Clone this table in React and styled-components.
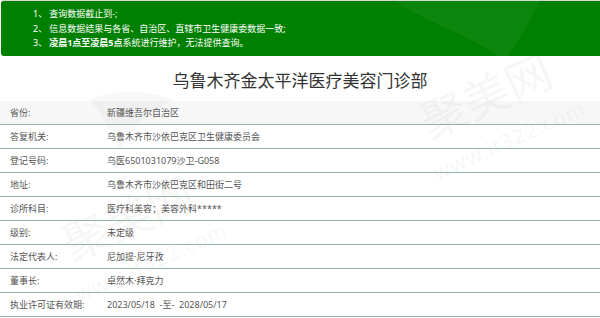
import React from "react";
import styled, { createGlobalStyle } from "styled-components";

const GlobalStyle = createGlobalStyle`
  html, body {
    margin: 0;
    padding: 0;
    background: #ffffff;
  }
  body {
    font-family: "Noto Sans", "Noto Sans CJK SC", sans-serif;
  }
`;

const Page = styled.div`
  position: relative;
  width: 600px;
  height: 318px;
  overflow: hidden;
`;

const Notice = styled.ul`
  list-style: none;
  margin: 0 -6px 0 1px;
  padding: 6px 0 5px 32px;
  background: #008000;
  border-top: 1px solid #d6d6d6;
  border-radius: 3px 0 0 3px;
  color: #ffffff;
  font-size: 9px;
  line-height: 14.5px;
`;

const NoticeItem = styled.li`
  white-space: nowrap;
  b {
    font-weight: 700;
  }
`;

const Num = styled.span`
  margin-right: 2px;
`;

const Title = styled.h1`
  margin: 0;
  padding: 13px 0 8px;
  font-size: 17px;
  line-height: 24px;
  font-weight: 400;
  color: #333333;
  text-align: center;
`;

const Table = styled.div`
  display: flex;
  flex-direction: column;
`;

const Row = styled.div`
  display: grid;
  grid-template-columns: 97px 1fr;
  align-items: center;
  height: 23px;
  padding-left: 10px;
  border-bottom: 1px solid #8cbc9f;
  background: ${(p) => (p.shaded ? "#f7f7f7" : "transparent")};
  font-size: 9px;
  color: #555555;
`;

const Label = styled.span`
  white-space: nowrap;
`;

const Value = styled.span`
  white-space: pre;
`;

const Watermark = styled.svg`
  position: absolute;
  left: 0;
  top: 0;
  pointer-events: none;
`;

const rows = [
  ["省份:", "新疆维吾尔自治区"],
  ["答复机关:", "乌鲁木齐市沙依巴克区卫生健康委员会"],
  ["登记号码:", "乌医6501031079沙卫-G058"],
  ["地址:", "乌鲁木齐市沙依巴克区和田街二号"],
  ["诊所科目:", "医疗科美容；美容外科*****"],
  ["级别:", "未定级"],
  ["法定代表人:", "尼加提·尼牙孜"],
  ["董事长:", "卓然木·拜克力"],
  ["执业许可证有效期:", "2023/05/18  -至-  2028/05/17"],
];

const markFill = "rgba(120,120,120,0.065)";

const Mark = ({ x, y }) => (
  <g transform={`translate(${x} ${y}) rotate(-24)`}>
    <text
      x="0"
      y="0"
      fontSize="46"
      fontFamily="'Noto Sans CJK SC', sans-serif"
      fill={markFill}
    >
      聚美网
    </text>
    <text
      x="-10"
      y="40"
      fontSize="21"
      fontFamily="'Noto Sans', sans-serif"
      fill={markFill}
      letterSpacing="1"
    >
      www.it322.com
    </text>
  </g>
);

export default function App() {
  return (
    <Page>
      <GlobalStyle />
      <Notice>
        <NoticeItem>
          <Num>1、</Num>查询数据截止到-;
        </NoticeItem>
        <NoticeItem>
          <Num>2、</Num>信息数据结果与各省、自治区、直辖市卫生健康委数据一致;
        </NoticeItem>
        <NoticeItem>
          <Num>3、</Num>
          <b>凌晨1点至凌晨5点</b>系统进行维护，无法提供查询。
        </NoticeItem>
      </Notice>
      <Title>乌鲁木齐金太平洋医疗美容门诊部</Title>
      <Table>
        {rows.map(([k, v], i) => (
          <Row key={k} shaded={i === 0}>
            <Label>{k}</Label>
            <Value>{v}</Value>
          </Row>
        ))}
      </Table>
      <Watermark width="600" height="318" viewBox="0 0 600 318">
        <path
          d="M395 0 C420 20 470 35 505 60 C520 40 530 20 540 0 Z"
          fill="rgba(255,255,255,0.05)"
        />
        <path
          d="M90 100 C110 90 140 88 175 100 C150 110 130 130 120 150 C110 130 100 112 90 100 Z"
          fill="rgba(120,120,120,0.05)"
        />
        <Mark x={430} y={140} />
        <Mark x={72} y={262} />
      </Watermark>
    </Page>
  );
}
